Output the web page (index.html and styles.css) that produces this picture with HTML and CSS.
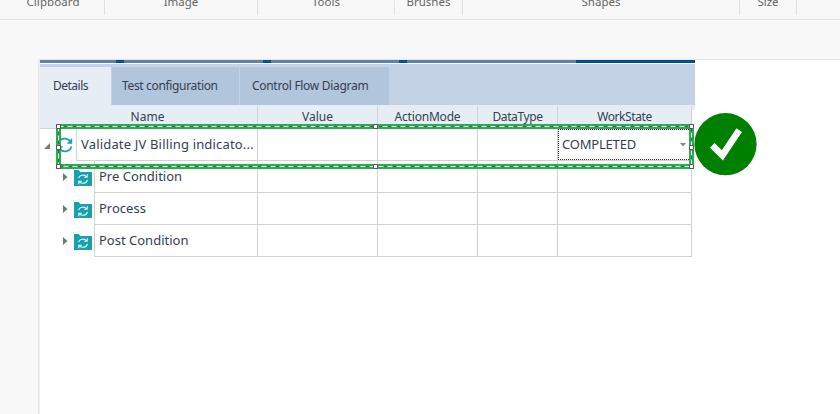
FILE: index.html
```html
<!DOCTYPE html>
<html lang="en">
<head>
<meta charset="utf-8">
<title>Details</title>
<link rel="stylesheet" href="styles.css">
</head>
<body>
<header class="ribbon">
  <div class="group clipboard"><span>Clipboard</span></div>
  <div class="group image"><span>Image</span></div>
  <div class="group tools"><span>Tools</span></div>
  <div class="group brushes"><span>Brushes</span></div>
  <div class="group shapes"><span>Shapes</span></div>
  <div class="group size"><span>Size</span></div>
</header>
<main class="canvas">
  <section class="panel">
    <div class="stripe"></div>
    <nav class="tabs">
      <div class="tab active"><span>Details</span></div>
      <div class="tab test"><span>Test configuration</span></div>
      <div class="tab flow"><span>Control Flow Diagram</span></div>
    </nav>
    <div class="head">
      <div class="name"><span>Name</span></div><div><span>Value</span></div><div><span class="h-action">ActionMode</span></div><div><span class="h-data">DataType</span></div><div><span class="h-work">WorkState</span></div>
    </div>
    <div class="row root">
      <div class="tree">
        <svg class="open" width="6" height="6" viewBox="0 0 6 6"><path d="M6 0v6H0z" fill="#777"/></svg>
        <svg class="sync" width="16" height="16" viewBox="0 0 16 16"><g fill="none" stroke="#18a0af" stroke-width="1.7"><path d="M1.5 6.5A6.6 6.6 0 0 1 13.5 4.8M14.5 9.5A6.6 6.6 0 0 1 2.5 11.2"/></g><path d="M15.2 1v5.8H9.7zM.8 15V9.2h5.5z" fill="#18a0af"/></svg>
      </div>
      <div class="cell label"><span class="r-root">Validate JV Billing indicato...</span></div><div class="cell"></div><div class="cell"></div><div class="cell"></div>
      <div class="cell"><div class="select"><span class="r-state">COMPLETED</span><svg width="6" height="4" viewBox="0 0 6 4"><path d="M0 0h6L3 3.4z" fill="#888"/></svg></div></div>
    </div>
    <div class="row child">
      <div class="tree"><svg class="closed" width="5" height="8" viewBox="0 0 5 8"><path d="M0 0l4.5 4L0 8z" fill="#777"/></svg><svg class="folder" width="18" height="16" viewBox="0 0 18 16"><path d="M0 0h5l1 2h12v14H0z" fill="#18a0af"/><path d="M4.5 8A4.6 4.1 0 0 1 12.5 6.7M13.5 10A4.6 4.1 0 0 1 5.5 11.8M13.2 4.2v3h-3M4.8 14.2v-3h3" fill="none" stroke="#e5f7f9" stroke-width="1.1"/></svg></div>
      <div class="cell label"><span>Pre Condition</span></div><div class="cell"></div><div class="cell"></div><div class="cell"></div><div class="cell"></div>
    </div>
    <div class="row child">
      <div class="tree"><svg class="closed" width="5" height="8" viewBox="0 0 5 8"><path d="M0 0l4.5 4L0 8z" fill="#777"/></svg><svg class="folder" width="18" height="16" viewBox="0 0 18 16"><path d="M0 0h5l1 2h12v14H0z" fill="#18a0af"/><path d="M4.5 8A4.6 4.1 0 0 1 12.5 6.7M13.5 10A4.6 4.1 0 0 1 5.5 11.8M13.2 4.2v3h-3M4.8 14.2v-3h3" fill="none" stroke="#e5f7f9" stroke-width="1.1"/></svg></div>
      <div class="cell label"><span>Process</span></div><div class="cell"></div><div class="cell"></div><div class="cell"></div><div class="cell"></div>
    </div>
    <div class="row child">
      <div class="tree"><svg class="closed" width="5" height="8" viewBox="0 0 5 8"><path d="M0 0l4.5 4L0 8z" fill="#777"/></svg><svg class="folder" width="18" height="16" viewBox="0 0 18 16"><path d="M0 0h5l1 2h12v14H0z" fill="#18a0af"/><path d="M4.5 8A4.6 4.1 0 0 1 12.5 6.7M13.5 10A4.6 4.1 0 0 1 5.5 11.8M13.2 4.2v3h-3M4.8 14.2v-3h3" fill="none" stroke="#e5f7f9" stroke-width="1.1"/></svg></div>
      <div class="cell label"><span>Post Condition</span></div><div class="cell"></div><div class="cell"></div><div class="cell"></div><div class="cell"></div>
    </div>
  </section>
  <svg class="selection" width="638" height="45" viewBox="0 0 638 45">
    <rect x="2.5" y="2.5" width="633" height="40" fill="none" stroke="#22b14c" stroke-width="5"/>
    <rect x="2.5" y="2.5" width="633" height="40" fill="none" stroke="#555" stroke-width="1"/>
    <rect x="2.5" y="2.5" width="633" height="40" fill="none" stroke="#fff" stroke-width="1" stroke-dasharray="5 4"/>
    <g fill="#fff" stroke="#555"><path d="M.5.5h4v4h-4zM317.5.5h4v4h-4zM633.5.5h4v4h-4zM.5 21.5h4v4h-4zM633.5 21.5h4v4h-4zM.5 40.5h4v4h-4zM317.5 40.5h4v4h-4zM633.5 40.5h4v4h-4z"/></g>
  </svg>
  <svg class="check" width="64" height="64" viewBox="0 0 64 64"><circle cx="31.5" cy="31.2" r="31.1" fill="#008000"/><path d="M18.3 32.4L28.4 42.4L45.2 17.2" fill="none" stroke="#fff" stroke-width="6.6"/></svg>
</main>
</body>
</html>
```
FILE: styles.css
```css
* { box-sizing: border-box; }
body { margin: 0; width: 840px; height: 414px; overflow: hidden; background: #f8f8f8; font-family: "Noto Sans", sans-serif; color: #354052; }
span { white-space: nowrap; }
svg { display: block; }
.ribbon { height: 20px; display: flex; border-bottom: 1px solid #e5e5e5; }
.group { height: 15px; border-right: 1px solid #e2e2e2; display: flex; justify-content: center; font-size: 11.5px; line-height: 16px; color: #666; }
.group span { margin-top: -6px; }
.clipboard { width: 105px; padding-left: 2px; letter-spacing: .1px; }
.image { width: 153px; }
.tools { width: 137px; }
.brushes { width: 68px; }
.shapes { width: 277px; }
.size { width: 57px; }
.canvas { position: relative; margin: 39px 0 0 39px; height: 355px; background: #fff; border-top: 1px solid #e5e5e5; border-left: 1px solid #eee; box-shadow: -1px 0 1px #e9e9e9; }
.panel { width: 655px; }
.stripe { height: 3px; background: linear-gradient(90deg, #5b83ac 76px, #004f99 76px 84px, #5b83ac 84px 223px, #004f99 223px 231px, #5b83ac 231px 359px, #004f99 359px 367px, #5b83ac 367px 536px, #004f99 536px); }
.tabs { height: 41px; margin-top: 1px; padding-top: 3px; background: #c4d2e5; display: flex; gap: 1px; }
.tab { background: #b1c5dc; font-size: 12px; line-height: 38px; }
.active { width: 71px; padding-left: 13px; background: #e6edf5; letter-spacing: -.5px; }
.test { width: 127px; padding-left: 10px; letter-spacing: -.34px; }
.flow { width: 149px; padding-left: 12px; letter-spacing: -.3px; }
.head { display: grid; grid-template-columns: 218px 120px 100px 80px 134px; height: 24px; background: linear-gradient(90deg, #e6edf5 652px, transparent 652px) 0 5px no-repeat, linear-gradient(#e6edf5, #e6edf5) 0 0 / 100% 5px no-repeat; padding-top: 1px; font-size: 12px; line-height: 22px; text-align: center; }
.head div { border-right: 1px solid #d2d2d2; border-bottom: 1px solid #d2d2d2; }
.head .name { padding-right: 2px; }
.h-action { letter-spacing: -.2px; }
.h-data, .h-work { letter-spacing: -.4px; }
.row { display: grid; height: 32px; width: 652px; }
.root { grid-template-columns: 36px 182px 120px 100px 80px 134px; }
.child { grid-template-columns: 54px 164px 120px 100px 80px 134px; }
.tree { display: flex; border-right: 1px solid #d2d2d2; }
.cell { border-right: 1px solid #d2d2d2; border-bottom: 1px solid #d2d2d2; font-size: 13px; line-height: 31px; }
.label { padding-left: 5px; }
.r-root { letter-spacing: .17px; }
.r-state { letter-spacing: -.2px; }
.open { margin: 14px 0 0 4px; }
.sync { margin: 8px 0 0 7px; }
.root .tree { width: 37px; }
.child .tree { width: 55px; }
.closed { margin: 12px 0 0 23px; }
.folder { margin: 9px 0 0 6px; }
.select { height: 31px; border: 1px dotted #333; display: flex; justify-content: space-between; align-items: center; padding: 0 4px 0 3px; line-height: 29px; }
.selection { position: absolute; left: 16px; top: 64px; }
.check { position: absolute; left: 654px; top: 53px; }
```
